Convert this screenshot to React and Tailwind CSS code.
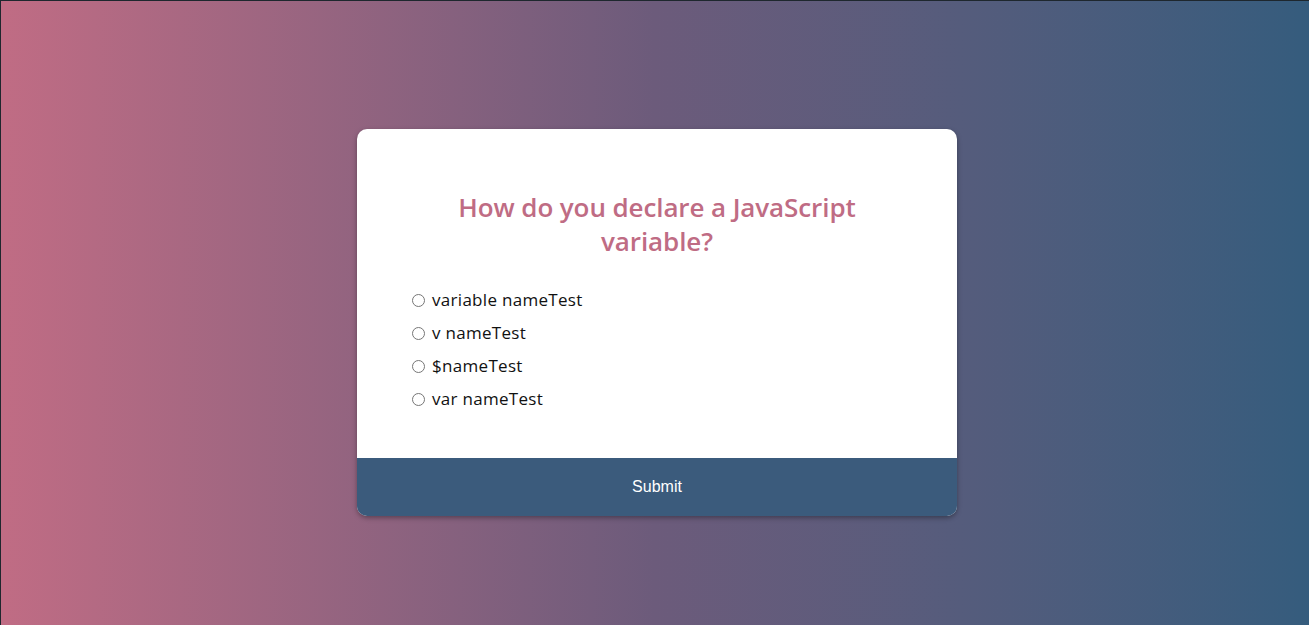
import React, { useState } from 'react';

const answers = [
  { id: 'a', label: 'variable nameTest' },
  { id: 'b', label: 'v nameTest' },
  { id: 'c', label: '$nameTest' },
  { id: 'd', label: 'var nameTest' },
];

const App = () => {
  const [selected, setSelected] = useState(null);

  return (
    <div className="h-[625px] w-full overflow-hidden border-t border-l border-[#1e272e] pl-[4px] bg-gradient-to-r from-[#c06c84] via-[#6c5b7b] to-[#355c7d] flex items-start justify-center font-['Open_Sans',sans-serif]">
      <div className="mt-[128px] w-[600px] bg-white rounded-[10px] overflow-hidden shadow-[0_2px_5px_rgba(0,0,0,0.35)]">
        {/* Question */}
        <div className="pt-[61px] pb-[47px] px-[55px]">
          <h2 className="text-center text-[26px] leading-[34px] font-semibold tracking-[-0.1px] text-[#bf6c84]">
            How do you declare a JavaScript
            <br />
            variable?
          </h2>

          <ul className="mt-[30px] flex flex-col gap-[9px]">
            {answers.map((a) => (
              <li key={a.id}>
                <label
                  className="flex items-center h-[24px] cursor-pointer"
                  onClick={() => setSelected(a.id)}
                >
                  <span
                    className={`w-[13px] h-[13px] rounded-full border border-[#767676] shrink-0 flex items-center justify-center ${
                      selected === a.id ? 'border-[#0075ff]' : ''
                    }`}
                  >
                    {selected === a.id && <span className="w-[7px] h-[7px] rounded-full bg-[#0075ff]" />}
                  </span>
                  <span className="ml-[7px] text-[17px] tracking-[0.3px] text-[#111]">{a.label}</span>
                </label>
              </li>
            ))}
          </ul>
        </div>

        {/* Footer */}
        <button className="block w-full h-[58px] bg-[#3b5b7c] text-white text-[16px] font-['Liberation_Sans',Arial,sans-serif]">
          Submit
        </button>
      </div>
    </div>
  );
};

export default App;
